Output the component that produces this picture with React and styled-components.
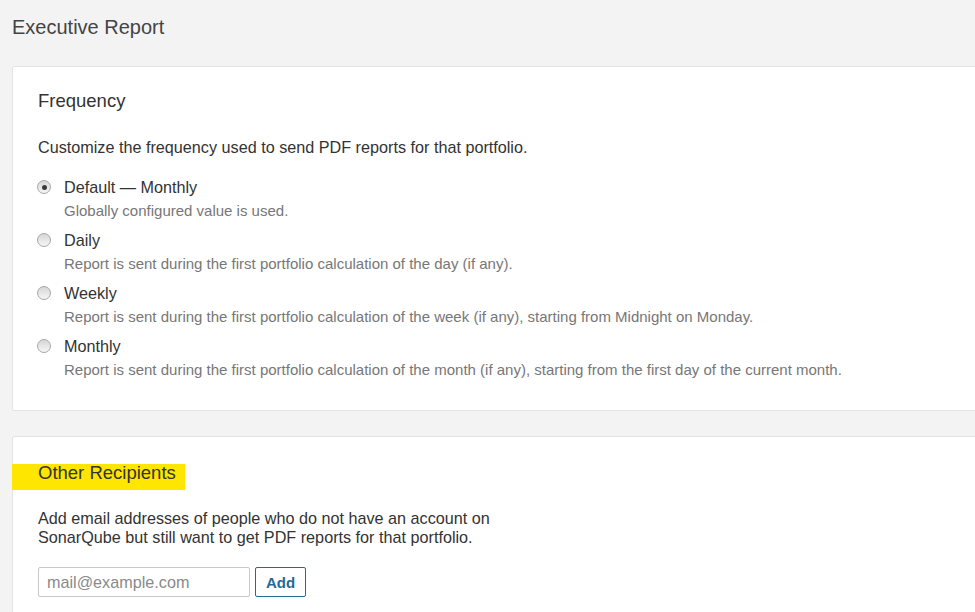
import React from "react"
import styled, { createGlobalStyle } from "styled-components"

const GlobalStyle = createGlobalStyle`
  html, body {
    margin: 0;
    padding: 0;
    background: #f3f3f3;
    font-family: "Liberation Sans", Arial, sans-serif;
    color: #333;
    overflow: hidden;
  }
`

const Page = styled.div`
  padding: 15px 0 0 12px;
  width: 1100px;
`

const Title = styled.h1`
  margin: 0 0 26px;
  font-size: 20px;
  line-height: 25px;
  font-weight: 400;
  color: #444;
`

const Card = styled.section`
  background: #fff;
  border: 1px solid #e4e4e4;
  border-radius: 2px;
  padding: ${(p) => p.$pad || "22px 25px 31px"};
  margin-bottom: 25px;
`

const Heading = styled.h2`
  margin: 0 0 ${(p) => p.$gap || "24px"};
  font-size: 18.5px;
  line-height: 24px;
  font-weight: 400;
  color: #333;
`

const Marked = styled.span`
  display: block;
  width: fit-content;
  margin: 0 0 -1px -26px;
  padding: 0 9px 8px 26px;
  line-height: 18px;
  background: #ffe600;
`

const Text = styled.p`
  margin: 0 0 20px;
  font-size: 16.2px;
  line-height: ${(p) => p.$lh || "20px"};
  color: #333;
`

const Options = styled.div`
  display: flex;
  flex-direction: column;
  gap: 10px;
`

const Option = styled.label`
  display: grid;
  grid-template-columns: 13px 1fr;
  column-gap: 13px;
  row-gap: 4px;
`

const Radio = styled.span`
  position: relative;
  width: 14px;
  height: 14px;
  margin: 3px 0 0 -1px;
  box-sizing: border-box;
  border-radius: 50%;
  border: 1px solid #a8a8a8;
  background: linear-gradient(#d6d6d6, #f6f6f6);

  &::after {
    content: "";
    display: ${(p) => (p.$checked ? "block" : "none")};
    position: absolute;
    left: 3.5px;
    top: 3.5px;
    width: 5px;
    height: 5px;
    border-radius: 50%;
    background: #3a3a3a;
  }
`

const Label = styled.span`
  font-size: 16.2px;
  line-height: 20px;
  color: #333;
`

const Hint = styled.span`
  grid-column: 2;
  font-size: 15px;
  line-height: 19px;
  color: #777;
`

const Form = styled.div`
  display: flex;
  gap: 5px;
  margin-top: 20px;
`

const Input = styled.input`
  width: 212px;
  height: 30px;
  box-sizing: border-box;
  border: 1px solid #c8c8c8;
  border-radius: 2px;
  padding: 0 8px;
  font-family: "Liberation Sans", Arial, sans-serif;
  font-size: 16.2px;
  color: #333;

  &::placeholder {
    color: #8a8a8a;
  }
`

const Button = styled.button`
  height: 30px;
  box-sizing: border-box;
  padding: 0 10px;
  border: 1px solid #236a97;
  border-radius: 2px;
  background: #fff;
  color: #236a97;
  font-family: "Liberation Sans", Arial, sans-serif;
  font-size: 15px;
  font-weight: 700;
`

const options = [
  { label: "Default — Monthly", hint: "Globally configured value is used.", checked: true },
  { label: "Daily", hint: "Report is sent during the first portfolio calculation of the day (if any)." },
  {
    label: "Weekly",
    hint: "Report is sent during the first portfolio calculation of the week (if any), starting from Midnight on Monday.",
  },
  {
    label: "Monthly",
    hint: "Report is sent during the first portfolio calculation of the month (if any), starting from the first day of the current month.",
  },
]

export default function App() {
  return (
    <Page>
      <GlobalStyle />
      <Title>Executive Report</Title>

      <Card>
        <Heading>Frequency</Heading>
        <Text>Customize the frequency used to send PDF reports for that portfolio.</Text>
        <Options>
          {options.map((o) => (
            <Option key={o.label}>
              <Radio $checked={o.checked} />
              <Label>{o.label}</Label>
              <Hint>{o.hint}</Hint>
            </Option>
          ))}
        </Options>
      </Card>

      <Card $pad="27px 25px 30px">
        <Heading as="div" $gap="20px">
          <Marked>Other Recipients</Marked>
        </Heading>
        <Text $lh="19px">
          Add email addresses of people who do not have an account on
          <br />
          SonarQube but still want to get PDF reports for that portfolio.
        </Text>
        <Form>
          <Input placeholder="mail@example.com" />
          <Button>Add</Button>
        </Form>
      </Card>
    </Page>
  )
}
